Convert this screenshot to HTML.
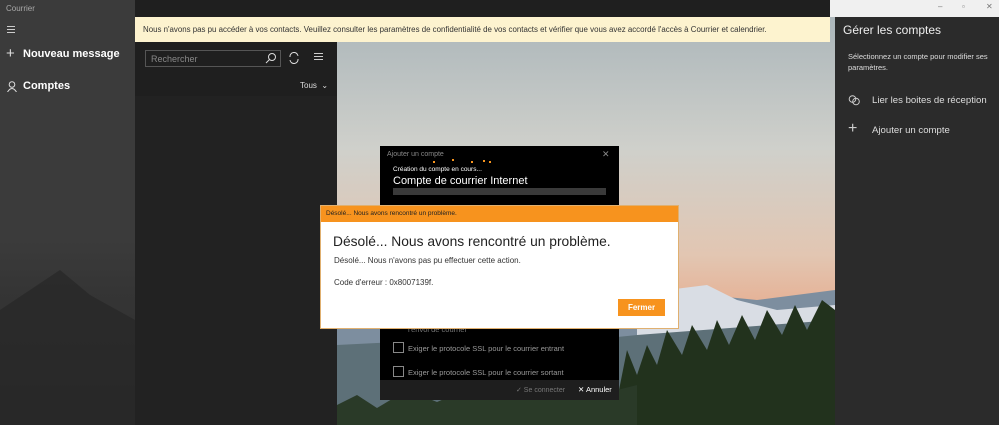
<!DOCTYPE html><html><head><style>
body{margin:0;width:999px;height:425px;overflow:hidden;position:relative;font-family:"Liberation Sans",sans-serif;background:#202020}
.a{position:absolute}
</style></head><body>
<div class="a" style="left:0;top:0;width:135px;height:425px;background:linear-gradient(#3b3b3b 0,#3b3b3b 240px,#353535 290px,#2c2c2c 425px)"></div>
<svg class="a" style="left:0;top:250px" width="135" height="175"><polygon points="0,60 30,40 60,20 90,45 135,70 135,175 0,175" fill="#262626" opacity=".7"/></svg>
<div class="a" style="left:6px;top:4px;font-size:8px;color:#aaa">Courrier</div>
<div class="a" style="left:7px;top:26px;width:8px;height:1px;background:#ccc;box-shadow:0 3px #ccc,0 6px #ccc"></div>
<div class="a" style="left:6px;top:45px;font-size:15px;color:#ddd">+</div>
<div class="a" style="left:23px;top:48px;font-size:11px;font-weight:bold;color:#fff">Nouveau message</div>
<svg class="a" style="left:7px;top:81px" width="10" height="11"><circle cx="5" cy="3.5" r="2.8" fill="none" stroke="#ddd"/><path d="M0.5 11 Q5 4 9.5 11" fill="none" stroke="#ddd"/></svg>
<div class="a" style="left:23px;top:80px;font-size:11px;font-weight:bold;color:#fff">Comptes</div>
<div class="a" style="left:135px;top:0;width:202px;height:425px;background:#1f1f1f"></div>
<div class="a" style="left:135px;top:96px;width:202px;height:329px;background:#222"></div>
<div class="a" style="left:145px;top:50px;width:136px;height:17px;border:1px solid #555;box-sizing:border-box;font-size:9px;color:#888;padding:3px 5px">Rechercher</div>
<svg class="a" style="left:265px;top:52px" width="12" height="12"><circle cx="7" cy="5" r="3.5" fill="none" stroke="#ddd"/><path d="M4.5 7.5 L1 11" stroke="#ddd"/></svg>
<svg class="a" style="left:288px;top:52px" width="12" height="12"><path d="M2 5 A4 4 0 0 1 10 4 M10 7 A4 4 0 0 1 2 8" fill="none" stroke="#ddd"/></svg>
<div class="a" style="left:314px;top:53px;width:9px;height:1px;background:#ccc;box-shadow:0 3px #ccc,0 6px #ccc"></div>
<div class="a" style="left:300px;top:81px;font-size:8px;color:#ddd">Tous &nbsp;⌄</div>
<svg class="a" style="left:337px;top:0" width="498" height="425">
<defs><linearGradient id="s" x1="0" y1="0" x2="0" y2="1"><stop offset="0" stop-color="#a7b3b8"/><stop offset=".35" stop-color="#cfd0cb"/><stop offset=".6" stop-color="#e2c6b2"/><stop offset=".72" stop-color="#e6b195"/></linearGradient></defs>
<rect width="498" height="425" fill="url(#s)"/>
<polygon points="0,310 60,325 120,315 200,330 260,300 320,285 370,295 420,300 498,290 498,425 0,425" fill="#7d8e9f"/>
<polygon points="300,310 330,290 370,285 400,300 440,310 498,305 498,335 300,335" fill="#d9dde4"/>
<polygon points="0,345 100,340 200,345 300,335 498,320 498,425 0,425" fill="#5d7078"/>
<polygon points="260,425 270,380 280,400 290,350 300,375 310,345 320,365 330,330 345,355 355,325 370,350 380,320 392,345 405,315 418,340 430,310 445,335 458,305 470,330 485,300 498,310 498,425" fill="#22321d"/>
<polygon points="0,425 0,405 20,395 40,408 70,390 100,402 140,385 180,400 220,380 260,395 300,385 300,425" fill="#2a3a28"/>
</svg>
<div class="a" style="left:135px;top:0;width:695px;height:17px;background:#1f1f1f"></div>
<div class="a" style="left:830px;top:0;width:169px;height:17px;background:#f0f0f0;font-size:8px;color:#777"><span class="a" style="left:108px;top:2px">–</span><span class="a" style="left:132px;top:2px">▫</span><span class="a" style="left:156px;top:2px">✕</span></div>
<div class="a" style="left:135px;top:17px;width:695px;height:25px;background:#fdf3cf;font-size:7.9px;color:#333;line-height:25px;padding-left:8px;box-sizing:border-box;white-space:nowrap">Nous n'avons pas pu accéder à vos contacts. Veuillez consulter les paramètres de confidentialité de vos contacts et vérifier que vous avez accordé l'accès à Courrier et calendrier.</div>
<div class="a" style="left:835px;top:17px;width:164px;height:408px;background:#2b2b2b"></div>
<div class="a" style="left:843px;top:23px;font-size:12px;color:#eee">Gérer les comptes</div>
<div class="a" style="left:848px;top:51px;width:140px;font-size:7.5px;line-height:11px;color:#ddd">Sélectionnez un compte pour modifier ses paramètres.</div>
<svg class="a" style="left:848px;top:95px" width="13" height="11"><circle cx="4.5" cy="4" r="3.3" fill="none" stroke="#ccc"/><circle cx="8" cy="6.5" r="3.3" fill="none" stroke="#ccc"/></svg>
<div class="a" style="left:872px;top:95px;font-size:9.6px;color:#ddd">Lier les boites de réception</div>
<div class="a" style="left:848px;top:120px;font-size:16px;color:#ccc">+</div>
<div class="a" style="left:872px;top:125px;font-size:9.6px;color:#ddd">Ajouter un compte</div>
<div class="a" style="left:380px;top:146px;width:239px;height:254px;background:#000"></div>
<div class="a" style="left:380px;top:380px;width:239px;height:20px;background:#1e1e1e"></div>
<div class="a" style="left:387px;top:151px;font-size:7px;color:#888">Ajouter un compte</div>
<div class="a" style="left:602px;top:149px;font-size:9px;color:#888">✕</div>
<div class="a" style="left:393px;top:166px;font-size:6.5px;color:#fff">Création du compte en cours...</div>
<div class="a" style="left:393px;top:175px;font-size:11px;color:#fff">Compte de courrier Internet</div>
<div class="a" style="left:393px;top:188px;width:213px;height:7px;background:#3a3a3a"></div>
<div class="a" style="left:433px;top:161px;width:2px;height:2px;background:#f7941d;box-shadow:19px -2px #f7941d,38px 0 #f7941d,50px -1px #f7941d,56px 0 #f7941d"></div>
<div class="a" style="left:393px;top:342px;width:9px;height:9px;border:1px solid #888"></div>
<div class="a" style="left:408px;top:344px;font-size:7.5px;color:#999">Exiger le protocole SSL pour le courrier entrant</div>
<div class="a" style="left:393px;top:366px;width:9px;height:9px;border:1px solid #888"></div>
<div class="a" style="left:408px;top:368px;font-size:7.5px;color:#999">Exiger le protocole SSL pour le courrier sortant</div>
<div class="a" style="left:408px;top:325px;font-size:7.5px;color:#777">l'envoi de courrier</div>
<div class="a" style="left:516px;top:386px;font-size:7px;color:#777">✓ Se connecter</div>
<div class="a" style="left:578px;top:385px;font-size:7.5px;color:#fff">✕ Annuler</div>
<div class="a" style="left:321px;top:206px;width:357px;height:122px;background:#fff;box-shadow:0 0 0 1px #e0b070"></div>
<div class="a" style="left:321px;top:206px;width:357px;height:16px;background:#f7931e;font-size:6.5px;color:#222;line-height:16px;padding-left:5px;box-sizing:border-box">Désolé... Nous avons rencontré un problème.</div>
<div class="a" style="left:333px;top:234px;font-size:13.8px;color:#222">Désolé... Nous avons rencontré un problème.</div>
<div class="a" style="left:334px;top:256px;font-size:8px;color:#333">Désolé... Nous n'avons pas pu effectuer cette action.</div>
<div class="a" style="left:334px;top:278px;font-size:8px;color:#333">Code d'erreur : 0x8007139f.</div>
<div class="a" style="left:618px;top:299px;width:47px;height:17px;background:#f7931e;color:#fff;font-size:8px;font-weight:bold;text-align:center;line-height:17px">Fermer</div>
</body></html>
